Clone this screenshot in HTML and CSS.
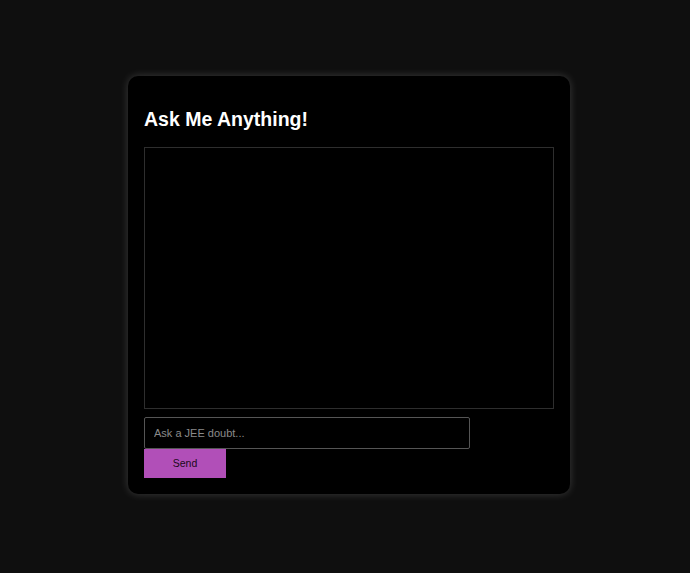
FILE: index.html
```html
<!DOCTYPE html>
<html lang="en">
<head>
    <meta charset="UTF-8">
    <meta name="viewport" content="width=device-width, initial-scale=1.0">
    <title>Ask Me Anything</title>
    <link rel="stylesheet" href="styles.css">
</head>
<body>
    <div class="chat-container">
        <h2>Ask Me Anything!</h2>
        <div id="chat_box" class="chat-box"></div>
        <input type="text" id="user_input" class="chat-input" placeholder="Ask a JEE doubt...">
        <button id="send_btn" class="send-btn">Send</button>
    </div>
</body>
</html>
```

FILE: styles.css
```css
*{
    box-sizing: border-box;
}

body{
    background-color: #0f0f0f;
    font-family: "Liberation Sans", Arial, sans-serif;
    color: #ffffff;
    display: flex;
    justify-content: center;
    align-items: center;
    height: 100vh;
    margin: 0;
    padding-left: 8px;
    padding-bottom: 4px;
}

.chat-container{
    background-color: #000000;
    width: 442px;
    padding: 16px;
    border-radius: 10px;
    box-shadow: 0 0 8px rgba(255, 255, 255, 0.18);
    display: flex;
    flex-direction: column;
    align-items: flex-start;
}

h2{
    font-size: 19.5px;
    line-height: 23px;
    margin: 16px 0 16px 0;
}

.chat-box{
    width: 100%;
    height: 262px;
    border: 1px solid #2e2e2e;
    overflow-y: auto;
}

.chat-input{
    margin-top: 8px;
    width: 326px;
    height: 32px;
    padding: 8px 9px;
    background-color: #000000;
    color: #ffffff;
    border: 1px solid #555555;
    border-radius: 2px;
    font-family: "Liberation Sans", Arial, sans-serif;
    font-size: 11px;
}

.chat-input::placeholder{
    color: #8a8a8a;
}

.send-btn{
    width: 82px;
    height: 29px;
    background-color: #b14fb8;
    color: #1a0a1a;
    border: none;
    font-family: "Liberation Sans", Arial, sans-serif;
    font-size: 10.5px;
    cursor: pointer;
}

.send-btn:hover{
    background-color: #9a3fa0;
}
```
